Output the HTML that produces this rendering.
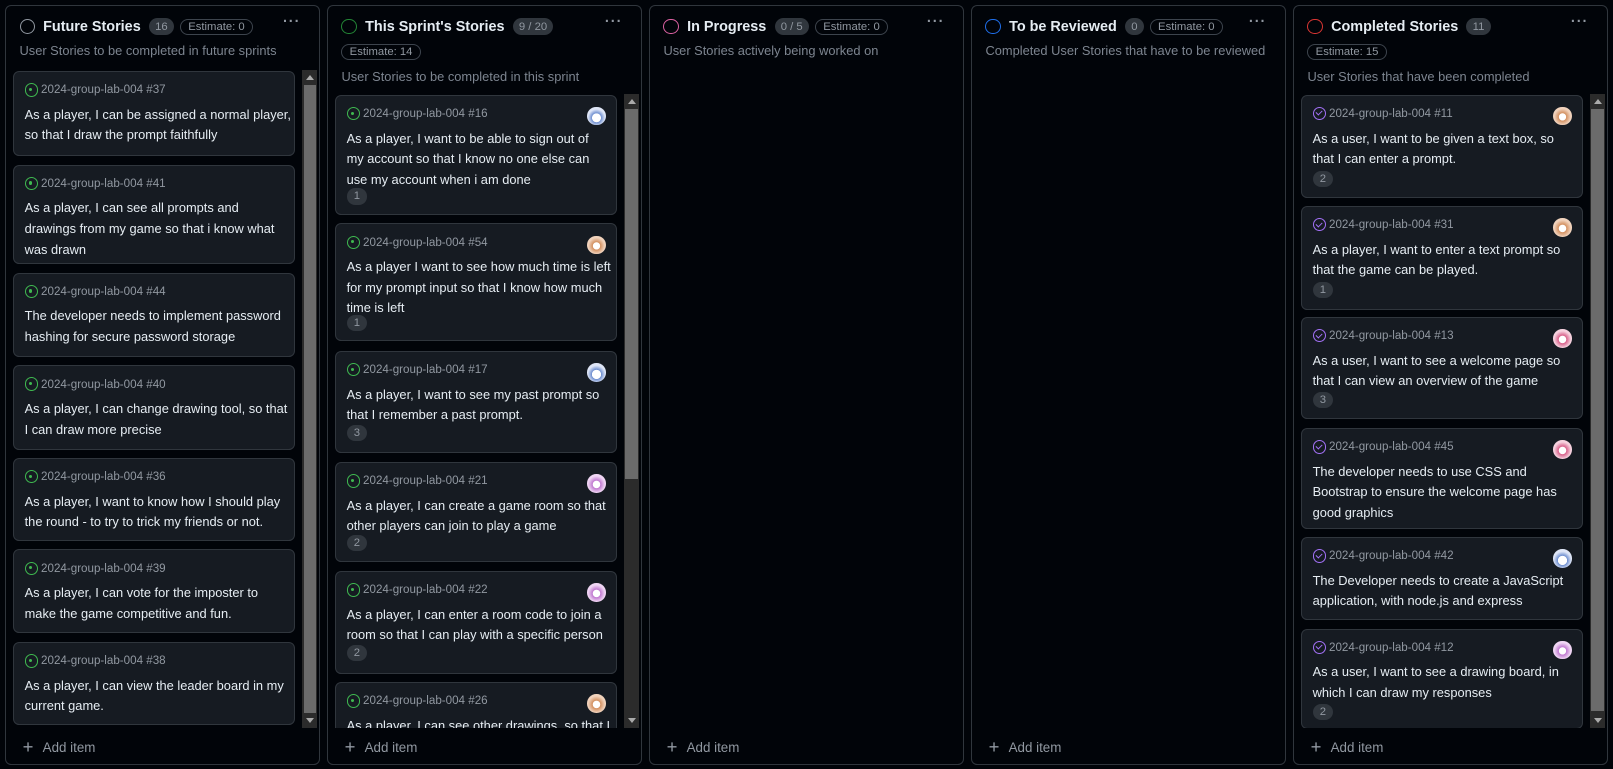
<!DOCTYPE html>
<html><head><style>
*{box-sizing:border-box;margin:0;padding:0}
html,body{width:1613px;height:769px;background:#010409;overflow:hidden}
body{font-family:"Liberation Sans",sans-serif;color:#e6edf3}
#w{position:relative;width:1568px;height:748px;zoom:1.02873}
.col{position:absolute;top:5px;width:306px;height:739px;border:1px solid #30363d;border-radius:6px;background:#010409}
.hd{position:absolute;left:13px;top:12px;display:flex;align-items:center;gap:6px;white-space:nowrap}
.ci{width:15px;height:15px;border-radius:50%;border:1.5px solid;margin-right:2px}
.tt{font-weight:bold;font-size:14px;color:#e6edf3;margin-right:2px}
.cnt{background:#30363d;color:#9198a1;font-size:11px;border-radius:10px;padding:2px 6px}
.est{border:1px solid #3d444d;color:#9198a1;font-size:11px;border-radius:10px;padding:1px 7px}
.dots{position:absolute;right:18px;top:8px;color:#9198a1;font-size:14px;letter-spacing:1px;font-weight:bold}
.desc{position:absolute;left:13px;color:#7d8590;font-size:12.5px;white-space:nowrap}
.list{position:absolute;left:7px;right:3px;overflow:hidden}
.card{position:absolute;left:0;width:274px;background:#161b22;border:1px solid #30363d;border-radius:6px}
.meta{position:absolute;left:10px;top:11px;font-size:11.3px;color:#9198a1;display:flex;align-items:center;gap:3px;white-space:nowrap}
.op{width:13px;height:13px;border-radius:50%;border:1.3px solid #3fb950;position:relative}
.op:after{content:"";position:absolute;left:3.5px;top:3.5px;width:3px;height:3px;border-radius:50%;background:#3fb950}
.dn{width:13px;height:13px;border-radius:50%;border:1.3px solid #a371f7;position:relative}
.dn:after{content:"";position:absolute;left:3px;top:1.5px;width:3px;height:5px;border-right:1.3px solid #a371f7;border-bottom:1.3px solid #a371f7;transform:rotate(45deg)}
.txt{position:absolute;left:10px;top:32px;font-size:12.5px;line-height:20px;color:#e6edf3;white-space:nowrap}
.bd{position:absolute;left:10px;width:20px;height:16px;border-radius:8px;background:#30363d;color:#9198a1;font-size:11px;text-align:center;line-height:16px}
.av{position:absolute;right:10px;top:11px;width:18px;height:18px;border-radius:50%}
.a1{background:radial-gradient(circle at 50% 60%,#fff 30%,#6f8fd0 32%,#dfe6f7 60%)}
.a2{background:radial-gradient(circle at 50% 55%,#fff 25%,#d39060 28%,#f1d3bd 60%)}
.a3{background:radial-gradient(circle at 50% 55%,#fff 25%,#c078d0 28%,#f0d6f4 60%)}
.a4{background:radial-gradient(circle at 50% 55%,#fff 25%,#d8608a 28%,#f6d2df 60%)}
.sb{position:absolute;right:2px;width:14px;background:#2b2b2b}
.th{position:absolute;left:1px;right:1px;background:#6b6b6b}
.ar{position:absolute;left:3px;width:0;height:0;border-left:4px solid transparent;border-right:4px solid transparent}
.add{position:absolute;left:16px;bottom:9px;color:#9198a1;font-size:13px;display:flex;gap:9px;align-items:center}
.add b{font-weight:normal;font-size:18px;line-height:14px}
</style></head><body><div id="w">

<div class="col" style="left:5px">
 <div class="hd"><span class="ci" style="border-color:#9198a1"></span><span class="tt">Future Stories</span><span class="cnt">16</span><span class="est">Estimate: 0</span></div>
 <div class="dots">···</div>
 <div class="desc" style="top:36px">User Stories to be completed in future sprints</div>
 <div class="list" style="top:62px;height:640px">
  <div class="card" style="top:1px;height:83px"><div class="meta"><span class="op"></span>2024-group-lab-004 #37</div><div class="txt">As a player, I can be assigned a normal player,<br>so that I draw the prompt faithfully</div></div>
  <div class="card" style="top:92px;height:97px"><div class="meta"><span class="op"></span>2024-group-lab-004 #41</div><div class="txt">As a player, I can see all prompts and<br>drawings from my game so that i know what<br>was drawn</div></div>
  <div class="card" style="top:197px;height:82px"><div class="meta"><span class="op"></span>2024-group-lab-004 #44</div><div class="txt">The developer needs to implement password<br>hashing for secure password storage</div></div>
  <div class="card" style="top:287px;height:82px"><div class="meta"><span class="op"></span>2024-group-lab-004 #40</div><div class="txt">As a player, I can change drawing tool, so that<br>I can draw more precise</div></div>
  <div class="card" style="top:377px;height:81px"><div class="meta"><span class="op"></span>2024-group-lab-004 #36</div><div class="txt">As a player, I want to know how I should play<br>the round - to try to trick my friends or not.</div></div>
  <div class="card" style="top:466px;height:81px"><div class="meta"><span class="op"></span>2024-group-lab-004 #39</div><div class="txt">As a player, I can vote for the imposter to<br>make the game competitive and fun.</div></div>
  <div class="card" style="top:556px;height:81px"><div class="meta"><span class="op"></span>2024-group-lab-004 #38</div><div class="txt">As a player, I can view the leader board in my<br>current game.</div></div>
 </div>
 <div class="sb" style="top:62px;height:640px"><div class="ar" style="top:5px;border-bottom:5px solid #aaa"></div><div class="th" style="top:15px;height:610px"></div><div class="ar" style="bottom:5px;border-top:5px solid #aaa"></div></div>
 <div class="add"><b>+</b>Add item</div>
</div>

<div class="col" style="left:318px">
 <div class="hd"><span class="ci" style="border-color:#238636"></span><span class="tt">This Sprint's Stories</span><span class="cnt">9 / 20</span></div>
 <div class="dots">···</div>
 <div class="est" style="position:absolute;left:13px;top:37px">Estimate: 14</div>
 <div class="desc" style="top:61px">User Stories to be completed in this sprint</div>
 <div class="list" style="top:85px;height:617px">
  <div class="card" style="top:1px;height:117px"><div class="meta"><span class="op"></span>2024-group-lab-004 #16</div><div class="av a1"></div><div class="txt">As a player, I want to be able to sign out of<br>my account so that I know no one else can<br>use my account when i am done</div><div class="bd" style="top:90px">1</div></div>
  <div class="card" style="top:126px;height:115px"><div class="meta"><span class="op"></span>2024-group-lab-004 #54</div><div class="av a2"></div><div class="txt">As a player I want to see how much time is left<br>for my prompt input so that I know how much<br>time is left</div><div class="bd" style="top:88px">1</div></div>
  <div class="card" style="top:250px;height:99px"><div class="meta"><span class="op"></span>2024-group-lab-004 #17</div><div class="av a1"></div><div class="txt">As a player, I want to see my past prompt so<br>that I remember a past prompt.</div><div class="bd" style="top:71px">3</div></div>
  <div class="card" style="top:358px;height:97px"><div class="meta"><span class="op"></span>2024-group-lab-004 #21</div><div class="av a3"></div><div class="txt">As a player, I can create a game room so that<br>other players can join to play a game</div><div class="bd" style="top:70px">2</div></div>
  <div class="card" style="top:464px;height:100px"><div class="meta"><span class="op"></span>2024-group-lab-004 #22</div><div class="av a3"></div><div class="txt">As a player, I can enter a room code to join a<br>room so that I can play with a specific person</div><div class="bd" style="top:71px">2</div></div>
  <div class="card" style="top:572px;height:90px"><div class="meta"><span class="op"></span>2024-group-lab-004 #26</div><div class="av a2"></div><div class="txt">As a player, I can see other drawings, so that I</div></div>
 </div>
 <div class="sb" style="top:85px;height:617px"><div class="ar" style="top:5px;border-bottom:5px solid #aaa"></div><div class="th" style="top:15px;height:360px"></div><div class="ar" style="bottom:5px;border-top:5px solid #aaa"></div></div>
 <div class="add"><b>+</b>Add item</div>
</div>

<div class="col" style="left:631px">
 <div class="hd"><span class="ci" style="border-color:#db61a2"></span><span class="tt">In Progress</span><span class="cnt">0 / 5</span><span class="est">Estimate: 0</span></div>
 <div class="dots">···</div>
 <div class="desc" style="top:36px">User Stories actively being worked on</div>
 <div class="add"><b>+</b>Add item</div>
</div>

<div class="col" style="left:944px">
 <div class="hd"><span class="ci" style="border-color:#1f6feb"></span><span class="tt">To be Reviewed</span><span class="cnt">0</span><span class="est">Estimate: 0</span></div>
 <div class="dots">···</div>
 <div class="desc" style="top:36px">Completed User Stories that have to be reviewed</div>
 <div class="add"><b>+</b>Add item</div>
</div>

<div class="col" style="left:1257px">
 <div class="hd"><span class="ci" style="border-color:#da3633"></span><span class="tt">Completed Stories</span><span class="cnt">11</span></div>
 <div class="dots">···</div>
 <div class="est" style="position:absolute;left:13px;top:37px">Estimate: 15</div>
 <div class="desc" style="top:61px">User Stories that have been completed</div>
 <div class="list" style="top:85px;height:617px">
  <div class="card" style="top:1px;height:101px"><div class="meta"><span class="dn"></span>2024-group-lab-004 #11</div><div class="av a2"></div><div class="txt">As a user, I want to be given a text box, so<br>that I can enter a prompt.</div><div class="bd" style="top:73px">2</div></div>
  <div class="card" style="top:109px;height:101px"><div class="meta"><span class="dn"></span>2024-group-lab-004 #31</div><div class="av a2"></div><div class="txt">As a player, I want to enter a text prompt so<br>that the game can be played.</div><div class="bd" style="top:73px">1</div></div>
  <div class="card" style="top:217px;height:99px"><div class="meta"><span class="dn"></span>2024-group-lab-004 #13</div><div class="av a4"></div><div class="txt">As a user, I want to see a welcome page so<br>that I can view an overview of the game</div><div class="bd" style="top:72px">3</div></div>
  <div class="card" style="top:325px;height:98px"><div class="meta"><span class="dn"></span>2024-group-lab-004 #45</div><div class="av a4"></div><div class="txt">The developer needs to use CSS and<br>Bootstrap to ensure the welcome page has<br>good graphics</div></div>
  <div class="card" style="top:431px;height:81px"><div class="meta"><span class="dn"></span>2024-group-lab-004 #42</div><div class="av a1"></div><div class="txt">The Developer needs to create a JavaScript<br>application, with node.js and express</div></div>
  <div class="card" style="top:520px;height:98px"><div class="meta"><span class="dn"></span>2024-group-lab-004 #12</div><div class="av a3"></div><div class="txt">As a user, I want to see a drawing board, in<br>which I can draw my responses</div><div class="bd" style="top:72px">2</div></div>
 </div>
 <div class="sb" style="top:85px;height:617px"><div class="ar" style="top:5px;border-bottom:5px solid #aaa"></div><div class="th" style="top:15px;height:585px"></div><div class="ar" style="bottom:5px;border-top:5px solid #aaa"></div></div>
 <div class="add"><b>+</b>Add item</div>
</div>
</div></body></html>
